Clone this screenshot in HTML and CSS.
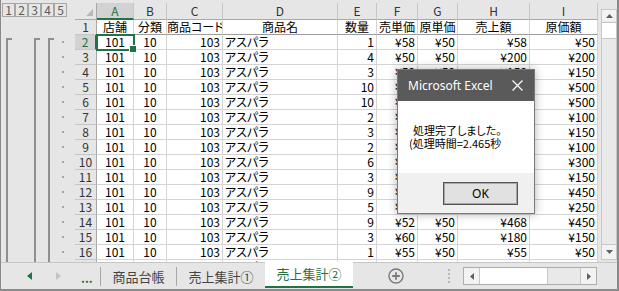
FILE: index.html
```html
<!DOCTYPE html>
<html lang="ja">
  <head>
    <meta charset="UTF-8" />
    <title>売上集計②</title>
    <link rel="stylesheet" href="styles.css">
  </head>
  <body>
    <div class="window">
      <div class="main">
        <div class="outline">
          <div class="levels">
            <span>1</span><span>2</span><span>3</span><span>4</span><span>5</span>
          </div>
          <svg class="brackets" width="74" height="245" viewBox="0 0 74 245">
            <g fill="#8f8f8f">
              <rect x="5" y="21" width="2" height="224" />
              <rect x="5" y="21" width="6" height="2" />
              <rect x="33" y="21" width="2" height="224" />
              <rect x="33" y="21" width="6" height="2" />
              <rect x="47" y="21" width="2" height="224" />
              <rect x="47" y="21" width="6" height="2" />
            </g>
            <g fill="#a5a5a5">
              <rect x="61" y="24" width="2" height="2" />
              <rect x="61" y="39" width="2" height="2" />
              <rect x="61" y="54" width="2" height="2" />
              <rect x="61" y="69" width="2" height="2" />
              <rect x="61" y="84" width="2" height="2" />
              <rect x="61" y="99" width="2" height="2" />
              <rect x="61" y="114" width="2" height="2" />
              <rect x="61" y="129" width="2" height="2" />
              <rect x="61" y="144" width="2" height="2" />
              <rect x="61" y="159" width="2" height="2" />
              <rect x="61" y="174" width="2" height="2" />
              <rect x="61" y="189" width="2" height="2" />
              <rect x="61" y="204" width="2" height="2" />
              <rect x="61" y="219" width="2" height="2" />
              <rect x="61" y="234" width="2" height="2" />
            </g>
          </svg>
        </div>

        <div class="sheet">
          <div class="grid">
            <div class="corner"><span class="corner_mark"></span></div>
            <div class="ch sel">A</div><div class="ch">B</div><div class="ch">C</div><div class="ch">D</div><div class="ch">E</div><div class="ch">F</div><div class="ch">G</div><div class="ch">H</div><div class="ch">I</div>

            <div class="rh">1</div>
            <div class="c hd">店舗</div><div class="c hd">分類</div><div class="c hd">商品コード</div><div class="c hd">商品名</div><div class="c hd">数量</div><div class="c hd">売単価</div><div class="c hd">原単価</div><div class="c hd">売上額</div><div class="c hd">原価額</div>

            <div class="rh sel">2</div>
            <div class="c m active">101</div><div class="c m">10</div><div class="c r">103</div><div class="c">アスパラ</div><div class="c r">1</div><div class="c r">¥58</div><div class="c r">¥50</div><div class="c r">¥58</div><div class="c r">¥50</div>

            <div class="rh">3</div>
            <div class="c m">101</div><div class="c m">10</div><div class="c r">103</div><div class="c">アスパラ</div><div class="c r">4</div><div class="c r">¥50</div><div class="c r">¥50</div><div class="c r">¥200</div><div class="c r">¥200</div>

            <div class="rh">4</div>
            <div class="c m">101</div><div class="c m">10</div><div class="c r">103</div><div class="c">アスパラ</div><div class="c r">3</div><div class="c r">¥50</div><div class="c r">¥50</div><div class="c r">¥150</div><div class="c r">¥150</div>

            <div class="rh">5</div>
            <div class="c m">101</div><div class="c m">10</div><div class="c r">103</div><div class="c">アスパラ</div><div class="c r">10</div><div class="c r">¥50</div><div class="c r">¥50</div><div class="c r">¥500</div><div class="c r">¥500</div>

            <div class="rh">6</div>
            <div class="c m">101</div><div class="c m">10</div><div class="c r">103</div><div class="c">アスパラ</div><div class="c r">10</div><div class="c r">¥50</div><div class="c r">¥50</div><div class="c r">¥500</div><div class="c r">¥500</div>

            <div class="rh">7</div>
            <div class="c m">101</div><div class="c m">10</div><div class="c r">103</div><div class="c">アスパラ</div><div class="c r">2</div><div class="c r">¥50</div><div class="c r">¥50</div><div class="c r">¥100</div><div class="c r">¥100</div>

            <div class="rh">8</div>
            <div class="c m">101</div><div class="c m">10</div><div class="c r">103</div><div class="c">アスパラ</div><div class="c r">3</div><div class="c r">¥50</div><div class="c r">¥50</div><div class="c r">¥150</div><div class="c r">¥150</div>

            <div class="rh">9</div>
            <div class="c m">101</div><div class="c m">10</div><div class="c r">103</div><div class="c">アスパラ</div><div class="c r">2</div><div class="c r">¥50</div><div class="c r">¥50</div><div class="c r">¥100</div><div class="c r">¥100</div>

            <div class="rh">10</div>
            <div class="c m">101</div><div class="c m">10</div><div class="c r">103</div><div class="c">アスパラ</div><div class="c r">6</div><div class="c r">¥50</div><div class="c r">¥50</div><div class="c r">¥300</div><div class="c r">¥300</div>

            <div class="rh">11</div>
            <div class="c m">101</div><div class="c m">10</div><div class="c r">103</div><div class="c">アスパラ</div><div class="c r">3</div><div class="c r">¥50</div><div class="c r">¥50</div><div class="c r">¥150</div><div class="c r">¥150</div>

            <div class="rh">12</div>
            <div class="c m">101</div><div class="c m">10</div><div class="c r">103</div><div class="c">アスパラ</div><div class="c r">9</div><div class="c r">¥50</div><div class="c r">¥50</div><div class="c r">¥450</div><div class="c r">¥450</div>

            <div class="rh">13</div>
            <div class="c m">101</div><div class="c m">10</div><div class="c r">103</div><div class="c">アスパラ</div><div class="c r">5</div><div class="c r">¥50</div><div class="c r">¥50</div><div class="c r">¥250</div><div class="c r">¥250</div>

            <div class="rh">14</div>
            <div class="c m">101</div><div class="c m">10</div><div class="c r">103</div><div class="c">アスパラ</div><div class="c r">9</div><div class="c r">¥52</div><div class="c r">¥50</div><div class="c r">¥468</div><div class="c r">¥450</div>

            <div class="rh">15</div>
            <div class="c m">101</div><div class="c m">10</div><div class="c r">103</div><div class="c">アスパラ</div><div class="c r">3</div><div class="c r">¥60</div><div class="c r">¥50</div><div class="c r">¥180</div><div class="c r">¥150</div>

            <div class="rh">16</div>
            <div class="c m">101</div><div class="c m">10</div><div class="c r">103</div><div class="c">アスパラ</div><div class="c r">1</div><div class="c r">¥55</div><div class="c r">¥50</div><div class="c r">¥55</div><div class="c r">¥50</div>

            <div class="rh">17</div>
            <div class="c m">101</div><div class="c m">10</div><div class="c r">103</div><div class="c">アスパラ</div><div class="c r">2</div><div class="c r">¥50</div><div class="c r">¥50</div><div class="c r">¥100</div><div class="c r">¥100</div>
          </div>
        </div>

        <div class="vscroll">
          <div class="sb_btn">
            <svg width="7" height="4" viewBox="0 0 7 4"><path d="M0 4 L3.5 0 L7 4 Z" fill="#606060" /></svg>
          </div>
          <div class="sb_thumb"></div>
          <div class="sb_track"></div>
          <div class="sb_btn sb_down">
            <svg width="7" height="4" viewBox="0 0 7 4"><path d="M0 0 L3.5 4 L7 0 Z" fill="#606060" /></svg>
          </div>
        </div>
      </div>

      <div class="tabbar">
        <div class="nav">
          <svg class="nav_prev" width="5" height="8" viewBox="0 0 5 8"><path d="M5 0 L0 4 L5 8 Z" fill="#217346" /></svg>
          <svg class="nav_next" width="5" height="8" viewBox="0 0 5 8"><path d="M0 0 L5 4 L0 8 Z" fill="#c3c3c3" /></svg>
          <span class="nav_more">...</span>
        </div>
        <div class="tab tab_first">商品台帳</div>
        <div class="tab tab_second">売上集計①</div>
        <div class="tab tab_active">売上集計②</div>
        <div class="add_sheet">
          <svg width="16" height="16" viewBox="0 0 16 16">
            <circle cx="8" cy="8" r="7" fill="none" stroke="#7a7a7a" stroke-width="1.4" />
            <path d="M8 4.2 V11.8 M4.2 8 H11.8" stroke="#7a7a7a" stroke-width="1.8" />
          </svg>
        </div>
        <div class="split">
          <svg width="2" height="14" viewBox="0 0 2 14">
            <g fill="#b8b8b8"><rect y="0" width="2" height="2" /><rect y="4" width="2" height="2" /><rect y="8" width="2" height="2" /><rect y="12" width="2" height="2" /></g>
          </svg>
        </div>
        <div class="hscroll">
          <div class="hs_btn">
            <svg width="4" height="7" viewBox="0 0 4 7"><path d="M4 0 L0 3.5 L4 7 Z" fill="#606060" /></svg>
          </div>
          <div class="hs_thumb"></div>
          <div class="hs_track"></div>
          <div class="hs_btn hs_right">
            <svg width="4" height="7" viewBox="0 0 4 7"><path d="M0 0 L4 3.5 L0 7 Z" fill="#606060" /></svg>
          </div>
        </div>
      </div>

      <div class="dialog">
        <div class="dialog_title">
          <span>Microsoft Excel</span>
          <svg width="11" height="11" viewBox="0 0 11 11"><path d="M0.5 0.5 L10.5 10.5 M10.5 0.5 L0.5 10.5" stroke="#fff" stroke-width="1.2" /></svg>
        </div>
        <div class="dialog_body">
          <p class="msg_first">処理完了しました。</p>
          <p>(処理時間=2.465秒</p>
        </div>
        <div class="dialog_foot">
          <button class="ok_btn">OK</button>
        </div>
      </div>
    </div>
  </body>
</html>
```

FILE: styles.css
```css
* {
  margin: 0;
  padding: 0;
  box-sizing: border-box;
}

body {
  font-family: "Noto Sans CJK JP", sans-serif;
  font-feature-settings: "palt";
  background-color: #fff;
}

.window {
  position: relative;
  width: 619px;
  height: 291px;
  background-color: #e6e6e6;
  border: 1px solid #8a8a8a;
  border-top: none;
  border-right-width: 2px;
  border-bottom-width: 2px;
  overflow: hidden;
}

.main {
  display: flex;
  height: 262px;
}

/* outline pane */
.outline {
  width: 74px;
  flex: none;
}

.levels {
  display: flex;
  margin: 3px 0 0 1px;
}

.levels span {
  width: 13px;
  height: 14px;
  border: 1px solid #a6a6a6;
  font-size: 12px;
  line-height: 12px;
  text-align: center;
  color: #5a5a5a;
}

.brackets {
  display: block;
}

/* sheet grid */
.sheet {
  width: 523px;
  flex: none;
  padding-top: 3px;
  overflow: hidden;
}

.grid {
  display: grid;
  grid-template-columns: 22px 37px 33px 56px 115px 39px 41px 40px 72px 68px;
  grid-template-rows: 17px;
  grid-auto-rows: 15px;
  font-size: 12px;
  line-height: 14px;
}

.corner {
  position: relative;
  background-color: #e6e6e6;
  border-right: 1px solid #a8a8a8;
  border-bottom: 1px solid #a8a8a8;
}

.corner_mark {
  position: absolute;
  right: 3px;
  bottom: 3px;
  width: 0;
  height: 0;
  border-left: 7px solid transparent;
  border-bottom: 7px solid #b9b9b9;
}

.ch {
  background-color: #e6e6e6;
  border-right: 1px solid #c6c6c6;
  border-bottom: 1px solid #a8a8a8;
  text-align: center;
  color: #333;
  line-height: 16px;
}

.ch.sel {
  background-color: #d2d2d2;
  color: #217346;
  border-bottom: 2px solid #217346;
}

.rh {
  background-color: #e6e6e6;
  border-right: 1px solid #a8a8a8;
  border-bottom: 1px solid #c6c6c6;
  text-align: center;
  color: #333;
}

.rh.sel {
  background-color: #d2d2d2;
  color: #217346;
  border-right: 2px solid #217346;
}

.c {
  background-color: #fff;
  border-right: 1px solid #d4d4d4;
  border-bottom: 1px solid #d4d4d4;
  padding: 0 2px;
  white-space: nowrap;
  overflow: hidden;
  color: #000;
}

.c.hd {
  text-align: center;
  border-bottom-color: #9c9c9c;
  padding: 0;
}

.c.m {
  text-align: center;
}

.c.r {
  text-align: right;
}

.c.active {
  position: relative;
  overflow: visible;
  outline: 2px solid #217346;
  outline-offset: -1px;
  z-index: 1;
}

.c.active::after {
  content: "";
  position: absolute;
  right: -4px;
  bottom: -4px;
  width: 6px;
  height: 6px;
  background-color: #217346;
  border: 1px solid #fff;
}

/* vertical scrollbar */
.vscroll {
  width: 16px;
  flex: none;
  margin: 9px 0 2px 3px;
  display: flex;
  flex-direction: column;
  border: 1px solid #c8c8c8;
  background-color: #e9e9e9;
}

.sb_btn {
  height: 11px;
  display: flex;
  align-items: center;
  justify-content: center;
  background-color: #f3f3f3;
}

.sb_down {
  height: 14px;
}

.sb_thumb {
  height: 17px;
  margin-top: 1px;
  background-color: #fff;
  border-top: 1px solid #c8c8c8;
  border-bottom: 1px solid #c8c8c8;
}

.sb_track {
  flex: 1;
  border-bottom: 1px solid #c8c8c8;
}

/* sheet tabs */
.tabbar {
  display: flex;
  align-items: center;
  height: 27px;
  border-top: 1px solid #c6c6c6;
  font-size: 13px;
  color: #444;
}

.nav {
  width: 100px;
  height: 19px;
  display: flex;
  align-items: center;
  border-right: 1px solid #a8a8a8;
}

.nav_prev {
  margin-left: 26px;
}

.nav_next {
  margin-left: 24px;
}

.nav_more {
  margin-left: 20px;
  margin-top: 3px;
  color: #217346;
  font-weight: bold;
  font-size: 12px;
}

.tab {
  height: 19px;
  line-height: 19px;
  text-align: center;
}

.tab_first {
  width: 76px;
  border-right: 1px solid #a8a8a8;
}

.tab_second {
  width: 88px;
}

.tab_active {
  width: 88px;
  height: 26px;
  line-height: 24px;
  align-self: flex-start;
  margin-top: -1px;
  background-color: #fff;
  color: #217346;
  border-bottom: 2px solid #217346;
}

.add_sheet {
  margin-left: 35px;
  display: flex;
}

.split {
  margin-left: 44px;
  display: flex;
}

.hscroll {
  margin-left: 13px;
  width: 134px;
  height: 18px;
  display: flex;
  border: 1px solid #adadad;
  background-color: #e9e9e9;
}

.hs_btn {
  width: 15px;
  display: flex;
  align-items: center;
  justify-content: center;
  background-color: #f3f3f3;
}

.hs_right {
  width: 16px;
  border-left: 1px solid #c8c8c8;
}

.hs_thumb {
  width: 69px;
  background-color: #fff;
  border-left: 1px solid #c8c8c8;
  border-right: 1px solid #c8c8c8;
}

.hs_track {
  flex: 1;
}

/* message box */
.dialog {
  position: absolute;
  left: 396px;
  top: 69px;
  width: 138px;
  height: 145px;
  background-color: #fff;
  border: 1px solid #7a7a7a;
  box-shadow: 0 0 9px rgba(0, 0, 0, 0.3);
  z-index: 2;
}

.dialog_title {
  height: 31px;
  background-color: #5a5a5a;
  color: #fff;
  display: flex;
  align-items: center;
  justify-content: space-between;
  padding: 0 11px 0 10px;
  font-family: "Noto Sans", sans-serif;
  font-size: 12px;
}

.dialog_body {
  height: 72px;
  padding: 23px 0 0 11px;
  font-size: 11px;
  line-height: 13px;
  color: #000;
}

.msg_first {
  padding-left: 4px;
}

.dialog_foot {
  height: 40px;
  background-color: #f0f0f0;
  display: flex;
  align-items: center;
  justify-content: flex-end;
  padding-right: 16px;
}

.ok_btn {
  width: 75px;
  height: 23px;
  background-color: #e1e1e1;
  border: 1px solid #555;
  box-shadow: inset 0 0 0 1px #a8a8a8;
  font-family: "Noto Sans", sans-serif;
  font-size: 12px;
  color: #000;
}
```
